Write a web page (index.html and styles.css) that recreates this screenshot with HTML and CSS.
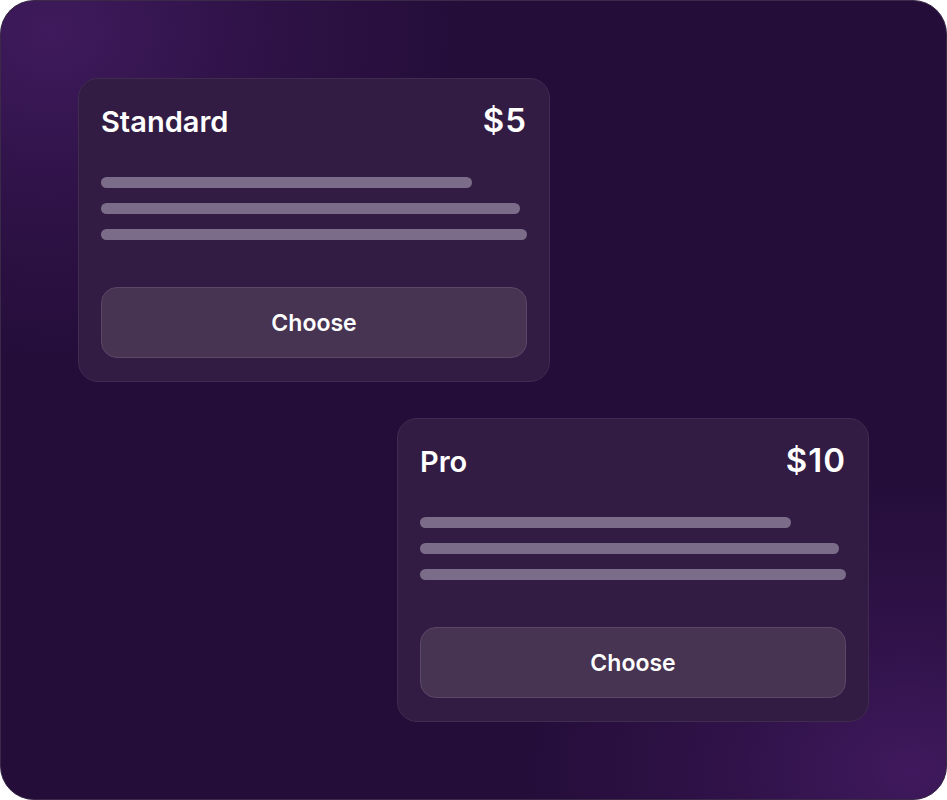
FILE: index.html
```html
<!DOCTYPE html>
<html lang="en">
<head>
<meta charset="utf-8">
<title>Pricing</title>
<link rel="stylesheet" href="styles.css">
</head>
<body>
<div class="stage">
  <div class="card card-start">
    <div class="card-head">
      <span class="plan">Standard</span>
      <span class="price">$5</span>
    </div>
    <div class="lines">
      <div class="line" style="width: 87.2%"></div>
      <div class="line" style="width: 98.4%"></div>
      <div class="line" style="width: 100%"></div>
    </div>
    <button class="choose">Choose</button>
  </div>
  <div class="card card-end">
    <div class="card-head">
      <span class="plan">Pro</span>
      <span class="price">$10</span>
    </div>
    <div class="lines">
      <div class="line" style="width: 87.2%"></div>
      <div class="line" style="width: 98.4%"></div>
      <div class="line" style="width: 100%"></div>
    </div>
    <button class="choose">Choose</button>
  </div>
</div>
</body>
</html>
```
FILE: styles.css
```css
* { box-sizing: border-box; }
html, body {
  margin: 0;
  padding: 0;
  background: #ffffff;
}
body {
  font-family: Inter, "Noto Sans", "Liberation Sans", sans-serif;
  color: #ffffff;
}
.stage {
  width: 947px;
  height: 800px;
  border-radius: 34px;
  border: 1px solid #3a2a48;
  padding: 77px;
  display: flex;
  flex-direction: column;
  justify-content: space-between;
  background:
    radial-gradient(ellipse 420px 340px at 50px 30px, rgba(70, 30, 102, 0.8), rgba(70, 30, 102, 0.35) 45%, rgba(70, 30, 102, 0) 100%),
    radial-gradient(ellipse 400px 300px at 910px 770px, rgba(70, 28, 102, 0.8), rgba(70, 28, 102, 0.35) 45%, rgba(70, 28, 102, 0) 100%),
    #240d39;
  overflow: hidden;
}
.card {
  width: 472px;
  height: 304px;
  border-radius: 20px;
  border: 1px solid #3f2c4f;
  background: #321c43;
  padding: 22px;
  display: flex;
  flex-direction: column;
}
.card-start { align-self: flex-start; }
.card-end { align-self: flex-end; }
.card-head {
  height: 40px;
  display: flex;
  justify-content: space-between;
  align-items: baseline;
  line-height: 38px;
}
.plan {
  font-size: 29px;
  font-weight: 600;
}
.price {
  font-size: 33px;
  font-weight: 600;
  letter-spacing: 1px;
}
.lines {
  margin-top: 36px;
  display: flex;
  flex-direction: column;
  gap: 15px;
}
.line {
  height: 11px;
  border-radius: 6px;
  background: #7b6d89;
}
.choose {
  margin-top: 47px;
  height: 71px;
  width: 100%;
  border-radius: 16px;
  border: 1px solid #5a4866;
  background: #473352;
  color: #ffffff;
  font-family: Inter, "Noto Sans", "Liberation Sans", sans-serif;
  font-size: 23px;
  font-weight: 600;
  padding: 0;
}
```
